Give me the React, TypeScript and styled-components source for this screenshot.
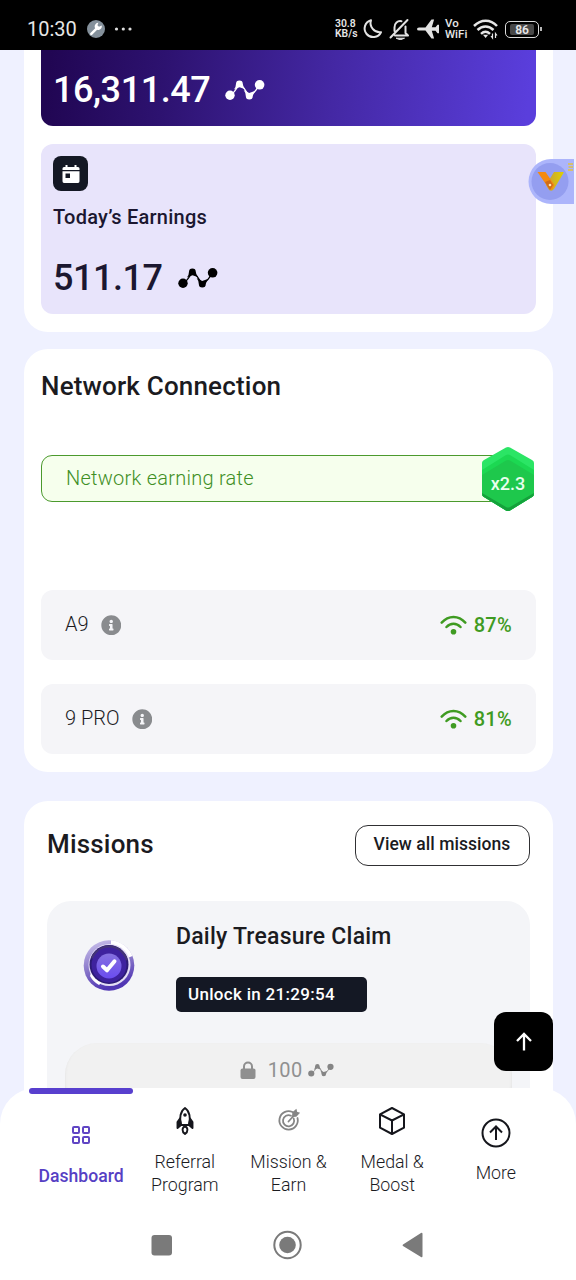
import React from "react";
import styled, { createGlobalStyle } from "styled-components";
import { FaInfoCircle } from "react-icons/fa";

const Global = createGlobalStyle`
  * { box-sizing: border-box; }
  body { margin: 0; font-family: Roboto, "Noto Sans", sans-serif; color: #1b1b1f; }
  svg { display: block; flex: none; }
`;

const Screen = styled.div`
  width: 576px;
  height: 1280px;
  display: flex;
  flex-direction: column;
  overflow: hidden;
  background: #eff1ff;
`;

const StatusBar = styled.header`
  height: 50px;
  flex: none;
  display: flex;
  align-items: center;
  padding: 8px 34px 0 27px;
  background: #000;
  color: #e6e6e6;
`;
const Clock = styled.span`
  font-size: 20px;
  line-height: 24px;
  width: 60px;
`;
const StatusIcons = styled.div`
  margin-left: auto;
  display: flex;
  align-items: center;
`;
const TinyStack = styled.div<{ $w: number; $size: number; $line: number; $weight: number }>`
  width: ${(p) => p.$w}px;
  display: flex;
  flex-direction: column;
  font-size: ${(p) => p.$size}px;
  line-height: ${(p) => p.$line}px;
  font-weight: ${(p) => p.$weight};
  white-space: nowrap;
`;
const Battery = styled.div`
  width: 34px;
  height: 17px;
  border: 1.5px solid #dcdcdc;
  border-radius: 5px;
  display: grid;
  place-items: center;
`;
const BatteryLevel = styled.div`
  width: 24px;
  height: 11px;
  border-radius: 2px;
  background: #474747;
  font-size: 12px;
  font-weight: 600;
  line-height: 12px;
  text-align: center;
`;

const Content = styled.main`
  height: 1078px;
  flex: none;
  overflow: hidden;
  padding: 0 23px 0 24px;
  display: flex;
  flex-direction: column;
`;
const Card = styled.section<{ $h: number; $gap?: number; $first?: boolean; $pad: string }>`
  height: ${(p) => p.$h}px;
  margin-bottom: ${(p) => p.$gap ?? 0}px;
  padding: ${(p) => p.$pad};
  flex: none;
  background: #fff;
  border-radius: ${(p) => (p.$first ? "0 0 24px 24px" : "24px")};
`;
const TotalPanel = styled.div`
  height: 76px;
  border-radius: 0 0 12px 12px;
  background: linear-gradient(96deg, #210653 2%, #2d1270 25%, #4428a4 59%, #5a3edc 98%);
  padding: 19px 12px 0;
  color: #fff;
`;
const TodayPanel = styled.div`
  height: 170px;
  margin-top: 18px;
  padding: 12px;
  border-radius: 12px;
  background: #e8e4fb;
  color: #1b1730;
`;
const IconTile = styled.div`
  width: 35px;
  height: 35px;
  border-radius: 8px;
  background: #141824;
  display: grid;
  place-items: center;
`;
const PanelLabel = styled.div`
  margin-top: 13px;
  font-size: 20px;
  font-weight: 500;
  letter-spacing: 0.24px;
  line-height: 26px;
`;
const Amount = styled.div<{ $top?: number }>`
  display: flex;
  align-items: center;
  gap: 15px;
  margin-top: ${(p) => p.$top ?? 0}px;
  font-size: 36px;
  font-weight: 500;
  letter-spacing: -0.45px;
  line-height: 42px;
`;
const Title = styled.h2`
  margin: 0;
  font-size: 26px;
  font-weight: 500;
  letter-spacing: 0.18px;
  line-height: 32px;
`;
const RateBar = styled.div`
  position: relative;
  height: 47px;
  margin: 53px 20px 0 0;
  padding: 0 24px;
  border: 1px solid #4b9a2d;
  border-radius: 11px 0 0 11px;
  background: #f6ffed;
  color: #3f8f25;
  font-size: 20px;
  font-weight: 300;
  letter-spacing: 0.25px;
  line-height: 44px;
`;
const Multiplier = styled.div`
  position: absolute;
  right: -20px;
  top: -10px;
  width: 54px;
  height: 66px;
  color: #e9ffee;
  font-size: 18px;
  font-weight: 500;
  letter-spacing: 0;
  line-height: 75px;
  text-align: center;
  svg { position: absolute; inset: 0; }
  span { position: relative; }
`;
const Devices = styled.div`
  margin-top: 88px;
  display: flex;
  flex-direction: column;
  gap: 24px;
`;
const Device = styled.div`
  height: 70px;
  padding: 0 24px;
  border-radius: 12px;
  background: #f5f5f8;
  display: flex;
  align-items: center;
`;
const DeviceName = styled.span`
  font-size: 20px;
  font-weight: 300;
  margin-right: 12px;
  padding-bottom: 2px;
`;
const Signal = styled.div`
  margin-left: auto;
  display: flex;
  align-items: center;
  gap: 6px;
  color: #3f9b22;
  font-size: 20px;
  font-weight: 500;
  letter-spacing: 0.3px;
  padding-bottom: 1px;
`;
const MissionsHead = styled.div`
  display: flex;
  align-items: center;
  justify-content: space-between;
  height: 41px;
  ${Title} { padding-bottom: 4px; }
`;
const OutlineButton = styled.button`
  width: 175px;
  height: 41px;
  border: 1px solid #303033;
  border-radius: 13px;
  background: #fff;
  color: #1b1b1f;
  padding: 0 0 3px;
  font: 500 17.5px Roboto, sans-serif;
  letter-spacing: 0.05px;
`;
const Mission = styled.article`
  height: 240px;
  margin-top: 35px;
  padding: 20px 18px 0;
  border-radius: 24px;
  background: #f4f5f8;
`;
const MissionTop = styled.div`
  display: flex;
  height: 122px;
  padding-left: 17px;
`;
const MissionBadge = styled.div`
  width: 94px;
  padding-top: 17px;
`;
const MissionTitle = styled.h3`
  margin: 0;
  padding-top: 1px;
  font-size: 23px;
  font-weight: 500;
  letter-spacing: 0.22px;
  line-height: 30px;
`;
const Countdown = styled.div`
  width: 191px;
  height: 35px;
  margin-top: 25px;
  padding-left: 12px;
  border-radius: 5px;
  background: #141824;
  color: #fff;
  font-size: 17px;
  font-weight: 500;
  letter-spacing: 0.3px;
  line-height: 34px;
`;
const Claim = styled.div`
  height: 76px;
  border-radius: 32px;
  background: #f1f1f1;
  box-shadow: inset 0 -2px 3px #ddd;
  color: #909090;
  display: flex;
  justify-content: center;
  padding: 14px 3px 0 0;
  font-size: 20px;
  line-height: 26px;
  letter-spacing: 0.3px;
`;
const ClaimLine = styled.div`
  display: flex;
  align-items: center;
  height: 26px;
`;

const BottomNav = styled.nav`
  position: relative;
  height: 122px;
  margin-top: -40px;
  flex: none;
  display: grid;
  grid-template-columns: repeat(5, 103.7px);
  justify-content: center;
  padding-left: 1px;
  border-radius: 36px 36px 0 0;
  background: #fff;
`;
const NavItem = styled.div<{ $active?: boolean; $top: number; $gap: number }>`
  position: relative;
  display: flex;
  flex-direction: column;
  align-items: center;
  padding-top: ${(p) => p.$top}px;
  gap: ${(p) => p.$gap}px;
  text-align: center;
  white-space: pre-line;
  font-size: ${(p) => (p.$active ? 17.6 : 17.8)}px;
  font-weight: ${(p) => (p.$active ? 500 : 300)};
  line-height: 23.5px;
  color: ${(p) => (p.$active ? "#5640c4" : "#1b1b1f")};
`;
const ActiveMark = styled.i`
  position: absolute;
  inset: 0 0 auto;
  height: 6px;
  border-radius: 3px;
  background: #583fce;
`;
const SystemNav = styled.footer`
  height: 70px;
  flex: 1;
  background: #fff;
  display: flex;
  align-items: flex-start;
  justify-content: space-between;
  padding: 20px 153px 0 151px;
`;
const FloatingUp = styled.div`
  position: absolute;
  left: 494px;
  top: 1012px;
  width: 59px;
  height: 59px;
  border-radius: 12px;
  background: #000;
  display: grid;
  place-items: center;
`;
const SideBubble = styled.div`
  position: absolute;
  left: 527px;
  top: 158px;
  width: 47px;
  height: 47px;
`;

const Trend = ({ color, w = 40 }: { color: string; w?: number }) => (
  <svg width={w} height={(w * 22) / 40} viewBox="0 0 40 22" fill={color}>
    <path d="M5.5 16.5 Q10 13 14.5 4.5 Q19 8 24.2 17.5 Q30 14 34.5 5.5" fill="none" stroke={color} strokeWidth="1.3" />
    <circle cx="5" cy="16.2" r="4.7" />
    <circle cx="34.6" cy="5.8" r="4.8" />
    <path d="M11 4.800a3.400 3.400 0 0 1 6.800 0q0 2.800 2.500 5.500l-5.800-2-5.500 2.200q2-2.600 2-5.700Z" />
    <path d="M20.800 17a3.500 3.500 0 0 0 7 0q.2-2.800 2.700-5.200l-6.300 2.200-5.500-3q2 2.700 2.100 6Z" />
  </svg>
);

const Wifi = () => (
  <svg width="28" height="20" viewBox="0 0 28 20" fill="none" stroke="#3f9b22" strokeWidth="2.5" strokeLinecap="round">
    <path d="M1.7 7.6C8.500 .1 18.500 .1 25.3 7.6M6.500 12c4-4.3 10-4.3 14 0" />
    <circle cx="13.500" cy="16.7" r="2.8" fill="#3f9b22" stroke="none" />
  </svg>
);

const StatusGlyphs = () => (
  <svg width="83" height="22" viewBox="0 0 83 22" fill="none" stroke="#e2e2e2" strokeWidth="2" strokeLinecap="round" strokeLinejoin="round">
    <path d="M9 2.200A8.600 8.600 0 1 0 19 14.200 9.300 9.300 0 0 1 9 2.200Z" />
    <path d="M45.500 2 28.500 19.500M32.500 13V9.500c0-4.500 3-7 7-6.300M43.500 8.500V15l2.500 2.500H33" />
    <path d="M34.500 20.200h8l-4 1.500Z" fill="#e2e2e2" strokeWidth="1" />
    <path
      d="M55 11q0-1.500 2-1.600h6.500L69.500 1.500h2.600l-2.300 7.800h3.700l2-2.500H77V15.200h-1.500l-2-2.500h-3.700l2.300 7.800h-2.600L63.500 12.600H57Q55 12.500 55 11Z"
      fill="#e2e2e2"
      stroke="none"
    />
  </svg>
);

const devices = [
  { name: "A9", signal: "87%" },
  { name: "9 PRO", signal: "81%" },
];

export default function App() {
  return (
    <Screen>
      <Global />
      <StatusBar>
        <Clock>10:30</Clock>
        <svg width="46" height="20" viewBox="0 0 46 20">
          <circle cx="9" cy="10" r="9" fill="#84909b" />
          <path d="m4.3 14.9 6-6" stroke="#fff" strokeWidth="2.5" strokeLinecap="round" />
          <path d="M14.7 6.4a3.6 3.6 0 1 1-3.3-2.6l-1 2.5 1.6 1.5Z" fill="#fff" />
          <g fill="#ddd"><circle cx="29.5" cy="10" r="1.6" /><circle cx="36.3" cy="10" r="1.6" /><circle cx="43" cy="10" r="1.6" /></g>
        </svg>
        <StatusIcons>
          <TinyStack $w={27} $size={10.4} $line={10.5} $weight={600}>
            <span>30.8</span>
            <span>KB/s</span>
          </TinyStack>
          <StatusGlyphs />
          <TinyStack $w={28} $size={11.5} $line={11.5} $weight={500}>
            <span>Vo</span>
            <span>WiFi</span>
          </TinyStack>
          <svg width="32" height="22" viewBox="0 0 32 22" fill="none" stroke="#e6e6e6" strokeWidth="2.500">
            <path d="M1 8C8 1 17.500 1 24 8M4.500 12c4.800-4.800 11.200-4.800 16 0M8 15.800c2.800-2.600 6.200-2.600 9 0" />
            <path d="m10 16.800 2.600 3.200 2.600-3.200Z" fill="#e6e6e6" stroke="none" />
            <path d="M19.500 15.500v4.500l-1.500-2M22.500 20v-4.500l1.500 2" strokeWidth="1.200" />
          </svg>
          <Battery><BatteryLevel>86</BatteryLevel></Battery>
          <svg width="3" height="6"><path d="M2 1v4" stroke="#e6e6e6" strokeWidth="1.600" /></svg>
        </StatusIcons>
      </StatusBar>

      <Content>
        <Card $h={282} $gap={17} $first $pad="0 17.5px 0 17px">
          <TotalPanel>
            <Amount>16,311.47<Trend color="#fff" /></Amount>
          </TotalPanel>
          <TodayPanel>
            <IconTile>
              <svg width="18" height="20" viewBox="0 0 18 20" fill="#fff">
                <path d="M3.500 1h2v2h7V1h2v2H16q1.500 0 1.500 1.500V6H.5V4.500Q.5 3 2 3h1.500Z" />
                <path fillRule="evenodd" d="M.5 7.200h17v10Q17.500 19 16 19H2Q.5 19 .5 17.200ZM3.500 9.500v4.500h4.500V9.500Z" />
              </svg>
            </IconTile>
            <PanelLabel>Today’s Earnings</PanelLabel>
            <Amount $top={27}>511.17<Trend color="#000" /></Amount>
          </TodayPanel>
        </Card>

        <Card $h={423} $gap={29} $pad="21px 17px 0">
          <Title>Network Connection</Title>
          <RateBar>
            Network earning rate
            <Multiplier>
              <svg width="54" height="66" viewBox="0 0 54 66">
                <path d="M25 1.500q2-1 4 0L51 14q2 1 2 3v31q0 2-2 3L29 64.500q-2 1-4 0L3 51q-2-1-2-3V17q0-2 2-3Z" fill="#2be565" />
                <path d="M1 24 25 9q2-1 4 0l24 15v24q0 2-2 3L29 64.500q-2 1-4 0L3 51q-2-1-2-3Z" fill="#1cd852" />
                <path d="M1 29 25 14.500q2-1 4 0L53 29v19q0 2-2 3L29 64.500q-2 1-4 0L3 51q-2-1-2-3Z" fill="#1ec84c" />
                <path d="M1 47q0 3 2 4l22 13.500q2 1 4 0L51 51q2-1 2-4L29 61q-2 1-4 0Z" fill="#15a13b" />
              </svg>
              <span>x2.3</span>
            </Multiplier>
          </RateBar>
          <Devices>
            {devices.map((d) => (
              <Device key={d.name}>
                <DeviceName>{d.name}</DeviceName>
                <FaInfoCircle size={20.5} color="#898b8e" />
                <Signal><Wifi />{d.signal}</Signal>
              </Device>
            ))}
          </Devices>
        </Card>

        <Card $h={400} $pad="24px 23.5px 0 23px">
          <MissionsHead>
            <Title>Missions</Title>
            <OutlineButton>View all missions</OutlineButton>
          </MissionsHead>
          <Mission>
            <MissionTop>
              <MissionBadge>
                <svg width="54" height="54" viewBox="0 0 54 54">
                  <defs>
                    <linearGradient id="ring" x1="0" y1="0" x2=".3" y2="1">
                      <stop offset="0" stopColor="#cfc7ee" /><stop offset=".55" stopColor="#8b7acb" /><stop offset="1" stopColor="#5036b3" />
                    </linearGradient>
                    <linearGradient id="core" x1="0" y1="0" x2="0" y2="1">
                      <stop offset="0" stopColor="#8571df" /><stop offset="1" stopColor="#6b4df0" />
                    </linearGradient>
                  </defs>
                  <circle cx="27" cy="27.500" r="25.300" fill="url(#ring)" />
                  <path d="M29 2.300A25.300 25.300 0 0 1 50.500 18l-5 2L29 9Z" fill="#fff" />
                  <circle cx="27.500" cy="27" r="21" fill="#e4def5" />
                  <path d="M8 38a22 22 0 0 0 9 9l3-3A20 20 0 0 1 9 35Z" fill="#fff" />
                  <circle cx="27" cy="26.500" r="19.500" fill="#2c1b75" />
                  <path d="M9 20A19.500 19.500 0 0 1 46 22L27 27Z" fill="#443577" />
                  <circle cx="27" cy="27" r="17.500" fill="#3e229e" />
                  <circle cx="27" cy="28" r="12.500" fill="url(#core)" />
                  <path d="m21 28.500 4 3.800 7.500-9" fill="none" stroke="#fff" strokeWidth="4" strokeLinecap="round" strokeLinejoin="round" />
                </svg>
              </MissionBadge>
              <div>
                <MissionTitle>Daily Treasure Claim</MissionTitle>
                <Countdown>Unlock in 21:29:54</Countdown>
              </div>
            </MissionTop>
            <Claim>
              <ClaimLine>
                <svg width="28" height="19" viewBox="0 0 28 19">
                  <path d="M4 9V5.500a4 4 0 0 1 8 0V9" fill="none" stroke="#8f8f8f" strokeWidth="2" />
                  <rect x="0.500" y="7.500" width="15" height="10.500" rx="2" fill="#8f8f8f" />
                </svg>
                100&nbsp;<Trend color="#858585" w={26} />
              </ClaimLine>
            </Claim>
          </Mission>
        </Card>
      </Content>

      <BottomNav>
        <NavItem $active $top={37} $gap={19.5}>
          <ActiveMark />
          <svg width="20" height="20" viewBox="0 0 20 20" fill="none" stroke="#6045c4" strokeWidth="2">
            <rect x="2" y="2" width="6" height="6" rx="1" /><rect x="12" y="2" width="6" height="6" rx="1" />
            <rect x="2" y="12" width="6" height="6" rx="1" /><rect x="12" y="12" width="6" height="6" rx="1" />
          </svg>
          <span>Dashboard</span>
        </NavItem>
        <NavItem $top={18} $gap={13.5}>
          <svg width="18" height="30" viewBox="0 0 18 30" fill="none" stroke="#15161c" strokeWidth="1.900" strokeLinejoin="round">
            <path d="M5 19C3 12 4.500 5 9 2c4.500 3 6 10 4 17Z" />
            <circle cx="9" cy="9" r="1.800" fill="#15161c" stroke="none" />
            <path d="M4 12.500 1.500 16v6L5 19ZM14 12.500l2.500 3.500v6L13 19Z" fill="#15161c" />
            <path d="M9 20.500c-3 1-3.500 5 0 7.500 3.500-2.500 3-6.500 0-7.500Z" />
          </svg>
          <span>{"Referral\nProgram"}</span>
        </NavItem>
        <NavItem $top={18} $gap={13.5}>
          <svg width="24" height="30" viewBox="0 0 24 30" fill="none" stroke="#858585" strokeWidth="1.800" strokeLinecap="round">
            <path d="M15.500 6A9.200 9.200 0 1 0 20.500 12M14 9.700A5.600 5.600 0 1 0 16.700 12.500M11.500 15.500l5-5.500" />
            <path d="m15.800 10.200.2-3.500L19 4l.6 2.500 2.200.6-2.800 3Z" fill="#858585" strokeWidth="1.400" />
          </svg>
          <span>{"Mission &\nEarn"}</span>
        </NavItem>
        <NavItem $top={18} $gap={13.5}>
          <svg width="28" height="30" viewBox="0 0 28 30" fill="none" stroke="#15161c" strokeWidth="2" strokeLinejoin="round">
            <path d="m14 2 12 6.300v13.400L14 28 2 21.700V8.300ZM2 8.300l12 6.200 12-6.200M14 14.500V28" />
          </svg>
          <span>{"Medal &\nBoost"}</span>
        </NavItem>
        <NavItem $top={30} $gap={13}>
          <svg width="30" height="30" viewBox="0 0 30 30" fill="none" stroke="#15161c" strokeWidth="2">
            <circle cx="15" cy="15" r="13.500" /><path d="M15 22V9M9 14.500l6-6 6 6" />
          </svg>
          <span>More</span>
        </NavItem>
      </BottomNav>

      <SystemNav>
        <svg width="22" height="30"><rect x="0.500" y="5" width="20.500" height="20.500" rx="3" fill="#7a7a7a" /></svg>
        <svg width="30" height="30"><circle cx="14.500" cy="15" r="13.200" fill="none" stroke="#7a7a7a" strokeWidth="2" /><circle cx="14.500" cy="15" r="8.300" fill="#7a7a7a" /></svg>
        <svg width="21" height="30"><path d="M1 14.500Q0 15 1 16l18 11q1.500.8 1.500-1V4q0-1.800-1.500-1Z" fill="#7a7a7a" /></svg>
      </SystemNav>

      <FloatingUp>
        <svg width="18" height="20" viewBox="0 0 18 20" fill="none" stroke="#fff" strokeWidth="2.300"><path d="M9 18.500V2M2 9l7-7 7 7" /></svg>
      </FloatingUp>
      <SideBubble>
        <svg width="47" height="47" viewBox="0 0 47 47">
          <defs>
            <linearGradient id="vr" x1="0" x2="1"><stop offset="0" stopColor="#c79d38" /><stop offset="1" stopColor="#dfd000" /></linearGradient>
          </defs>
          <path d="M47 1H24a22.500 22.500 0 0 0 0 45h23Z" fill="#acb5fb" />
          <circle cx="23" cy="23.500" r="18.500" fill="#949ef0" />
          <path d="M27 14h9q1 0 .5 1L27 31q-2 3-5 1l-3-5Z" fill="url(#vr)" />
          <path d="M10.500 14h8l9 13-2 4q-2 2-4-1Z" fill="#f48a10" />
          <path d="m18 24 5-2 3 5-3 5Z" fill="#cf6c18" />
          <circle cx="23" cy="27" r="1.300" fill="#ffe8b0" />
          <path d="M41 6h5M41.500 9h4.500M41 12h5" stroke="#d4bf70" strokeWidth="1.800" />
        </svg>
      </SideBubble>
    </Screen>
  );
}
